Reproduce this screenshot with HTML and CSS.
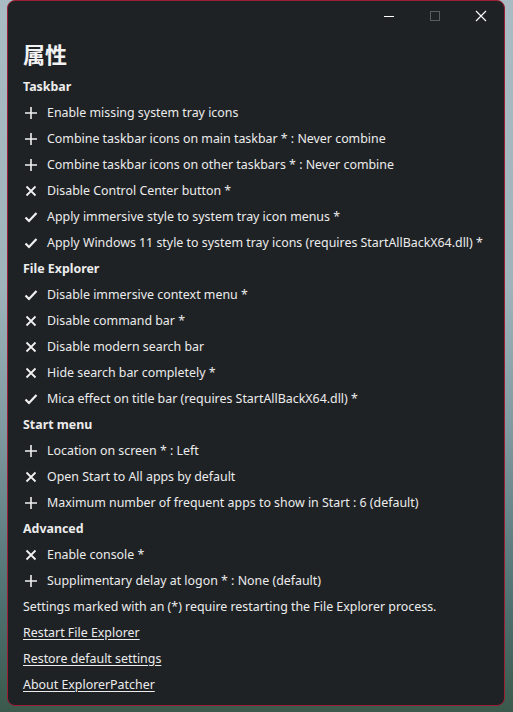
FILE: index.html
```html
<!DOCTYPE html>
<html lang="en">
<head>
<meta charset="utf-8">
<title>属性</title>
<link rel="stylesheet" href="styles.css">
</head>
<body>
<div class="window">
  <div class="titlebar">
    <div class="cap"><svg width="12" height="12" viewBox="0 0 12 12"><path d="M1 6.5H11" stroke="#fff" stroke-width="1"/></svg></div>
    <div class="cap"><svg width="12" height="12" viewBox="0 0 12 12"><rect x="1.5" y="1.5" width="9" height="9" fill="none" stroke="#5a5d60" stroke-width="1"/></svg></div>
    <div class="cap"><svg width="12" height="12" viewBox="0 0 12 12"><path d="M1 1L11 11M11 1L1 11" stroke="#fff" stroke-width="1.1"/></svg></div>
  </div>
  <h1 class="title">属性</h1>
  <div class="list">
    <div class="head">Taskbar</div>
    <div class="row"><span class="ic plus"></span>Enable missing system tray icons</div>
    <div class="row"><span class="ic plus"></span>Combine taskbar icons on main taskbar * : Never combine</div>
    <div class="row"><span class="ic plus"></span>Combine taskbar icons on other taskbars * : Never combine</div>
    <div class="row"><span class="ic cross"></span>Disable Control Center button *</div>
    <div class="row"><span class="ic check"></span>Apply immersive style to system tray icon menus *</div>
    <div class="row"><span class="ic check"></span>Apply Windows 11 style to system tray icons (requires StartAllBackX64.dll) *</div>
    <div class="head">File Explorer</div>
    <div class="row"><span class="ic check"></span>Disable immersive context menu *</div>
    <div class="row"><span class="ic cross"></span>Disable command bar *</div>
    <div class="row"><span class="ic cross"></span>Disable modern search bar</div>
    <div class="row"><span class="ic cross"></span>Hide search bar completely *</div>
    <div class="row"><span class="ic check"></span>Mica effect on title bar (requires StartAllBackX64.dll) *</div>
    <div class="head">Start menu</div>
    <div class="row"><span class="ic plus"></span>Location on screen * : Left</div>
    <div class="row"><span class="ic cross"></span>Open Start to All apps by default</div>
    <div class="row"><span class="ic plus"></span>Maximum number of frequent apps to show in Start : 6 (default)</div>
    <div class="head">Advanced</div>
    <div class="row"><span class="ic cross"></span>Enable console *</div>
    <div class="row"><span class="ic plus"></span>Supplimentary delay at logon * : None (default)</div>
    <div class="note">Settings marked with an (*) require restarting the File Explorer process.</div>
    <a class="link" href="#">Restart File Explorer</a>
    <a class="link" href="#">Restore default settings</a>
    <a class="link" href="#">About ExplorerPatcher</a>
  </div>
</div>
</body>
</html>
```

FILE: styles.css
```css
html, body {
  margin: 0;
  padding: 0;
}
body {
  width: 513px;
  height: 712px;
  overflow: hidden;
  background: linear-gradient(180deg, #a9bcc3 0%, #9fb3bb 40%, #7f9aa0 60%, #4f6f70 85%, #3b5a4c 100%);
  font-family: "Noto Sans", "Open Sans", sans-serif;
  color: #ececec;
}
.window {
  box-sizing: border-box;
  margin-left: 7px;
  width: 498px;
  height: 706px;
  background: #1f2225;
  border: 1px solid #9a1f35;
  border-radius: 8px;
  display: flex;
  flex-direction: column;
}
.titlebar {
  display: flex;
  justify-content: flex-end;
  height: 30px;
}
.cap {
  width: 46px;
  height: 30px;
  display: flex;
  align-items: center;
  justify-content: center;
}
.title {
  margin: 5px 0 3px 15px;
  font-family: "Noto Sans CJK SC", sans-serif;
  font-weight: 700;
  font-size: 22px;
  line-height: 35px;
  height: 35px;
  color: #f2f2f2;
}
.list {
  display: flex;
  flex-direction: column;
  padding-left: 15px;
  font-size: 12.4px;
}
.head, .row, .note, .link {
  height: 26px;
  line-height: 26px;
  white-space: nowrap;
}
.head {
  font-weight: 700;
}
.row {
  display: flex;
  align-items: center;
}
.link {
  color: #ececec;
  text-decoration: underline;
  text-underline-offset: 2px;
  align-self: flex-start;
}
.ic {
  width: 14px;
  height: 14px;
  margin: 0 9px 0 1px;
  background-repeat: no-repeat;
  background-position: center;
  flex: none;
}
.plus {
  background-image: url("data:image/svg+xml;utf8,<svg xmlns='http://www.w3.org/2000/svg' width='14' height='14' viewBox='0 0 14 14'><path d='M7 1V13M1 7H13' stroke='%23f0f0f0' stroke-width='1.6'/></svg>");
}
.cross {
  background-image: url("data:image/svg+xml;utf8,<svg xmlns='http://www.w3.org/2000/svg' width='14' height='14' viewBox='0 0 14 14'><path d='M2.5 2.5L11.5 11.5M11.5 2.5L2.5 11.5' stroke='%23f0f0f0' stroke-width='1.8'/></svg>");
}
.check {
  background-image: url("data:image/svg+xml;utf8,<svg xmlns='http://www.w3.org/2000/svg' width='14' height='14' viewBox='0 0 14 14'><path d='M1.5 7.5L5 11L12.5 3' fill='none' stroke='%23f0f0f0' stroke-width='2.2'/></svg>");
}
```
